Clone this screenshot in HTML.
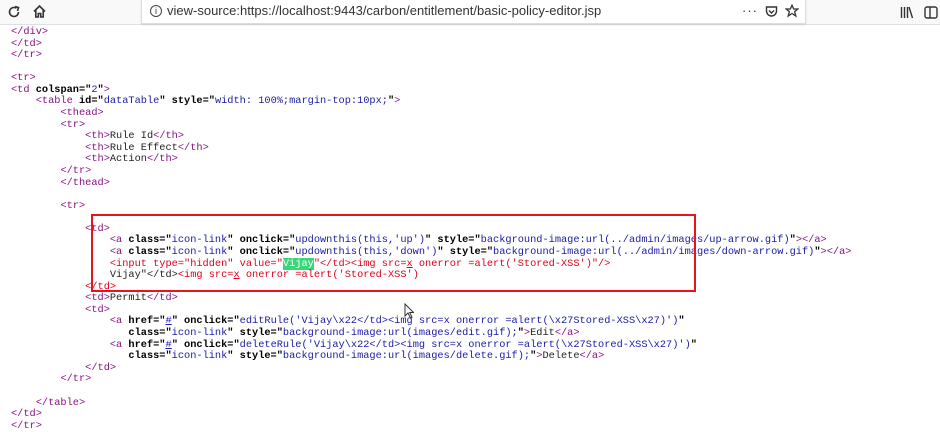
<!DOCTYPE html>
<html><head><meta charset="utf-8"><style>
body{margin:0;width:940px;height:429px;overflow:hidden;background:#fff;position:relative;font-family:"Liberation Sans",sans-serif}
.bar{position:absolute;left:0;top:0;width:940px;height:24px;background:#f9f9fa;border-bottom:1px solid #e0e0e2}
.url{position:absolute;left:141px;top:0;width:663px;height:23px;background:#fff;border:1px solid #ddd;border-top:none;box-shadow:0 1px 2px rgba(0,0,0,.1);font-size:13px;color:#333;line-height:22px}
pre{position:absolute;left:11px;top:27px;margin:0;font-family:"Liberation Mono",monospace;font-size:10.3px;line-height:11.58px;color:#000;font-weight:bold;letter-spacing:0}
.t{color:#881280;font-weight:normal}
.v{color:#1a1aa6;font-weight:normal}
.r{color:#e0001a;font-weight:normal}
.n{font-weight:normal;color:#222}
.h{background:#38d878;color:#fff;font-weight:normal}
.box{position:absolute;left:91px;top:214px;width:601px;height:74px;border:2px solid #e8141c}
</style></head><body>
<div class="bar">
<svg style="position:absolute;left:7px;top:5px" width="14" height="14" viewBox="0 0 14 14"><path d="M11.5 7A4.5 4.5 0 1 1 9.5 3.2" fill="none" stroke="#333" stroke-width="1.6"/><path d="M8 1.5L11.5 2.5L10.5 6" fill="none" stroke="#333" stroke-width="1.6"/></svg>
<svg style="position:absolute;left:32px;top:4px" width="15" height="15" viewBox="0 0 15 15"><path d="M2 7.5L7.5 2L13 7.5M3.8 6V13H6.3V9.5H8.7V13H11.2V6" fill="none" stroke="#333" stroke-width="1.6"/></svg>
<div class="url"><span style="position:absolute;left:8px;top:5px;width:10px;height:10px;border:1.3px solid #444;border-radius:50%;font-size:9px;line-height:10px;text-align:center">i</span><span style="position:absolute;left:25px">view-source:https://localhost:9443/carbon/entitlement/basic-policy-editor.jsp</span>
<span style="position:absolute;left:600px;top:0px;font-size:13px;letter-spacing:1px">···</span>
<svg style="position:absolute;left:623px;top:5px" width="13" height="13" viewBox="0 0 13 13"><path d="M1.5 2h10v4a5 5 0 0 1-10 0z" fill="none" stroke="#333" stroke-width="1.4"/><path d="M4 5.5l2.5 2.5 2.5-2.5" fill="none" stroke="#333" stroke-width="1.4"/></svg>
<svg style="position:absolute;left:643px;top:4px" width="14" height="14" viewBox="0 0 14 14"><path d="M7 1.2L8.7 5H12.8L9.6 7.6L10.8 12L7 9.5L3.2 12L4.4 7.6L1.2 5H5.3z" fill="none" stroke="#333" stroke-width="1.3"/></svg></div>
<svg style="position:absolute;left:900px;top:6px" width="14" height="13" viewBox="0 0 14 13"><path d="M1.5 1v11M4.5 1v11M7.5 1v11M9 1l3.5 11" stroke="#333" stroke-width="1.4" fill="none"/></svg>
<svg style="position:absolute;left:924px;top:6px" width="14" height="13" viewBox="0 0 14 13"><rect x="1" y="1" width="12" height="11" rx="2" fill="none" stroke="#333" stroke-width="1.4"/><path d="M6 1v11" stroke="#333" stroke-width="1.4"/></svg>
</div>
<pre><span class="t">&lt;/div&gt;</span>
<span class="t">&lt;/td&gt;</span>
<span class="t">&lt;/tr&gt;</span>

<span class="t">&lt;tr&gt;</span>
<span class="t">&lt;td</span> colspan="<span class="v">2</span>"<span class="t">&gt;</span>
    <span class="t">&lt;table</span> id="<span class="v">dataTable</span>" style="<span class="v">width: 100%;margin-top:10px;</span>"<span class="t">&gt;</span>
        <span class="t">&lt;thead&gt;</span>
        <span class="t">&lt;tr&gt;</span>
            <span class="t">&lt;th&gt;</span><span class="n">Rule Id</span><span class="t">&lt;/th&gt;</span>
            <span class="t">&lt;th&gt;</span><span class="n">Rule Effect</span><span class="t">&lt;/th&gt;</span>
            <span class="t">&lt;th&gt;</span><span class="n">Action</span><span class="t">&lt;/th&gt;</span>
        <span class="t">&lt;/tr&gt;</span>
        <span class="t">&lt;/thead&gt;</span>

        <span class="t">&lt;tr&gt;</span>

            <span class="t">&lt;td&gt;</span>
                <span class="t">&lt;a</span> class="<span class="v">icon-link</span>" onclick="<span class="v">updownthis(this,'up')</span>" style="<span class="v">background-image:url(../admin/images/up-arrow.gif)</span>"<span class="t">&gt;&lt;/a&gt;</span>
                <span class="t">&lt;a</span> class="<span class="v">icon-link</span>" onclick="<span class="v">updownthis(this,'down')</span>" style="<span class="v">background-image:url(../admin/images/down-arrow.gif)</span>"<span class="t">&gt;&lt;/a&gt;</span>
                <span class="r">&lt;input type="hidden" value="</span><span class="h">Vijay</span><span class="r">"&lt;/td&gt;&lt;img src=<u>x</u> onerror =alert('Stored-XSS')"/&gt;</span>
                <span class="n">Vijay"&lt;/td&gt;</span><span class="r">&lt;img src=<u>x</u> onerror =alert('Stored-XSS')</span>
            <span class="r">&lt;/td&gt;</span>
            <span class="t">&lt;td&gt;</span><span class="n">Permit</span><span class="t">&lt;/td&gt;</span>
            <span class="t">&lt;td&gt;</span>
                <span class="t">&lt;a</span> href="<span class="v"><u>#</u></span>" onclick="<span class="v">editRule('Vijay\x22&lt;/td&gt;&lt;img src=x onerror =alert(\x27Stored-XSS\x27)')</span>"
                   class="<span class="v">icon-link</span>" style="<span class="v">background-image:url(images/edit.gif);</span>"<span class="t">&gt;</span><span class="n">Edit</span><span class="t">&lt;/a&gt;</span>
                <span class="t">&lt;a</span> href="<span class="v"><u>#</u></span>" onclick="<span class="v">deleteRule('Vijay\x22&lt;/td&gt;&lt;img src=x onerror =alert(\x27Stored-XSS\x27)')</span>"
                   class="<span class="v">icon-link</span>" style="<span class="v">background-image:url(images/delete.gif);</span>"<span class="t">&gt;</span><span class="n">Delete</span><span class="t">&lt;/a&gt;</span>
            <span class="t">&lt;/td&gt;</span>
        <span class="t">&lt;/tr&gt;</span>

    <span class="t">&lt;/table&gt;</span>
<span class="t">&lt;/td&gt;</span>
<span class="t">&lt;/tr&gt;</span></pre>
<div class="box"></div>
<svg style="position:absolute;left:404px;top:303px" width="10" height="16" viewBox="0 0 10 16"><path d="M1 1V13L4 10L6.5 15L8 14.3L5.7 9.5H9.5z" fill="#fff" stroke="#333" stroke-width="1"/></svg>
</body></html>
